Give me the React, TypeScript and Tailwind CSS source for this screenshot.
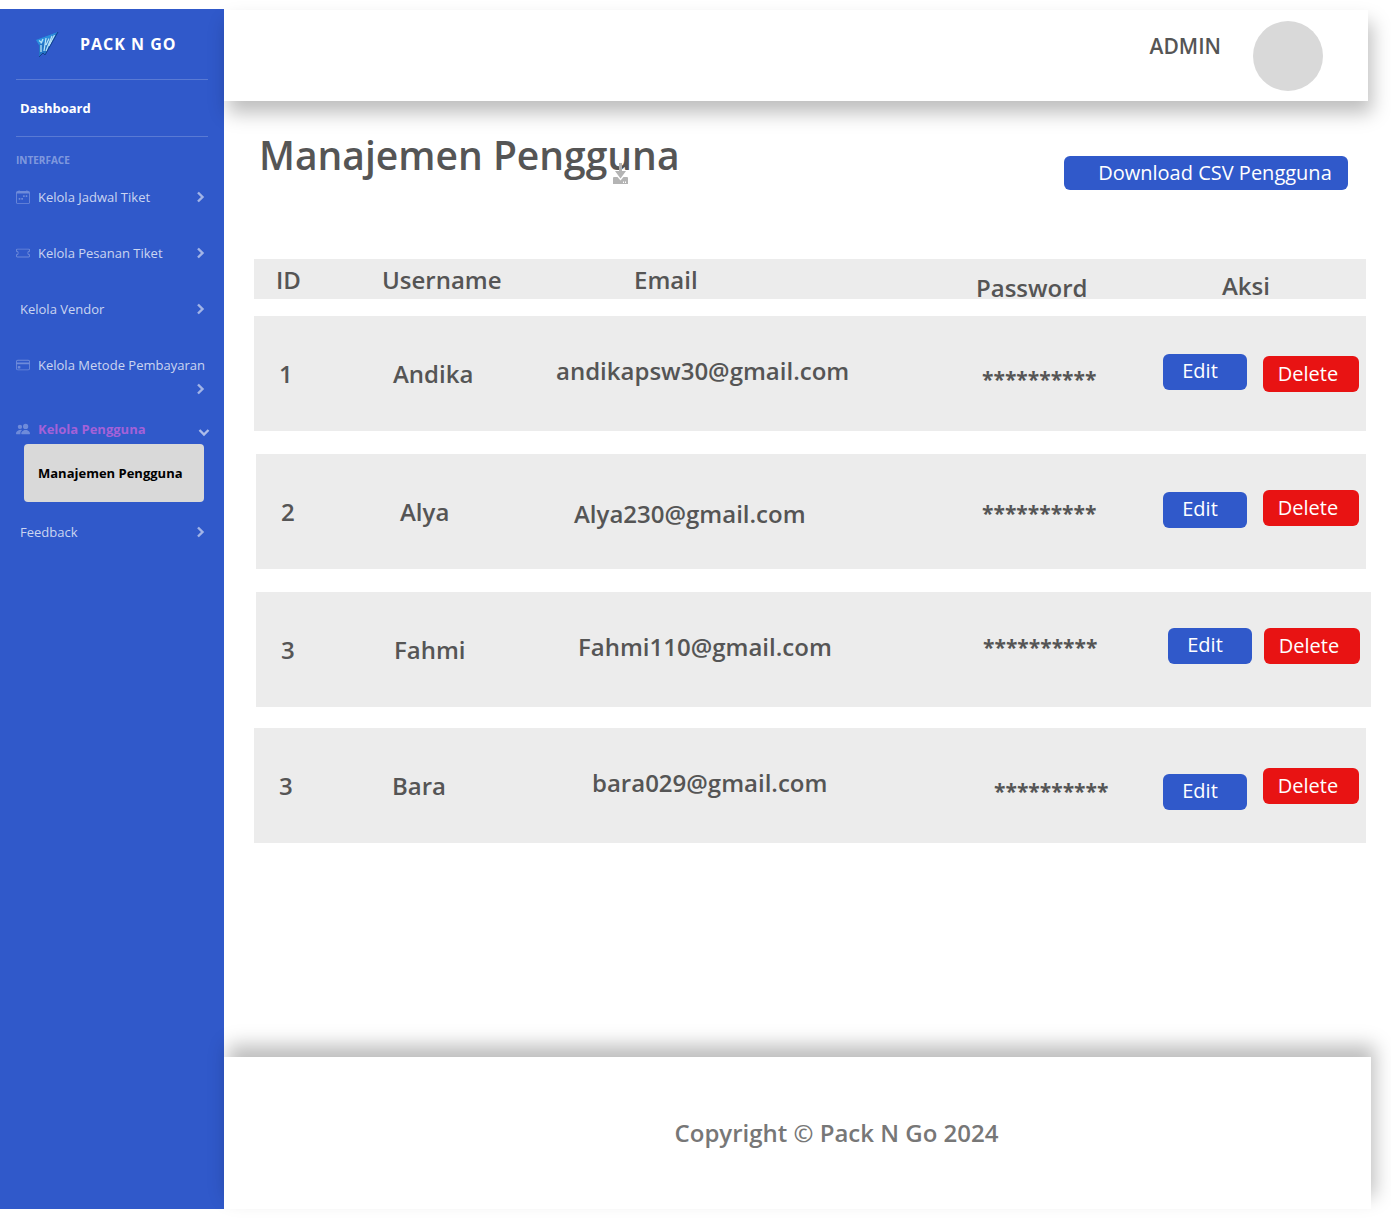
import React from "react";
import { BsCalendarWeek, BsTicket, BsCreditCard, BsPeopleFill } from "react-icons/bs";

type User = {
  id: string;
  name: string;
  email: string;
  row: string;
  nameCell: string;
  emailCell: string;
  passwordCell: string;
  actionCell: string;
  edit: string;
  remove: string;
};

const users: User[] = [
  {
    id: "1",
    name: "Andika",
    email: "andikapsw30@gmail.com",
    row: "mt-[17px] mr-[5px]",
    nameCell: "pl-[19px]",
    emailCell: "pt-10 pl-3",
    passwordCell: "pt-12 pl-4",
    actionCell: "gap-4",
    edit: "mt-[38px]",
    remove: "mt-10",
  },
  {
    id: "2",
    name: "Alya",
    email: "Alya230@gmail.com",
    row: "mt-[23px] ml-0.5 mr-[5px]",
    nameCell: "pl-6",
    emailCell: "pt-[45px] pl-7",
    passwordCell: "pt-11 pl-4",
    actionCell: "gap-4",
    edit: "mt-[38px]",
    remove: "mt-9",
  },
  {
    id: "3",
    name: "Fahmi",
    email: "Fahmi110@gmail.com",
    row: "mt-[23px] ml-0.5",
    nameCell: "pl-[18px]",
    emailCell: "pt-10 pl-8",
    passwordCell: "pt-10 pl-3",
    actionCell: "gap-3",
    edit: "mt-9",
    remove: "mt-9",
  },
  {
    id: "3",
    name: "Bara",
    email: "bara029@gmail.com",
    row: "mt-[21px] mr-[5px]",
    nameCell: "pl-[18px]",
    emailCell: "pt-10 pl-12",
    passwordCell: "pt-12 pl-7",
    actionCell: "gap-4",
    edit: "mt-[46px]",
    remove: "mt-10",
  },
];

function Logo() {
  return (
    <svg width="26" height="28" viewBox="0 0 26 28" aria-hidden="true">
      <path d="M24 2 L2 10 L5 15 L5 27 L9 23 L11 25 Z" fill="#2375c6" />
      <path d="M24 2 L2 10 L5 15 Z" fill="#2b8ede" />
      <path
        d="M5 10.500 L8 13 M9 9 L7 13.500 M7 15 V22 M12 8 L10 21 M15 8.500 L12 15 M18 6 L12 21 M20.500 5 L15 16"
        stroke="#b5e2f8"
        strokeWidth="1.3"
        fill="none"
      />
      <path d="M24 2 L11 25 L9 23 L5 27" stroke="#123f8c" strokeWidth="1" fill="none" />
    </svg>
  );
}

function DownloadIcon() {
  return (
    <svg
      className="absolute top-7 left-[354px]"
      width="15"
      height="21"
      viewBox="0 0 15 21"
      fill="#b4b4b4"
      aria-hidden="true"
    >
      <path d="M6 0h3v8h4L7.500 15.500 2 8h4z" />
      <path
        d="M0 15q0-1 1-1h3.500l3 3.500 3-3.500H14q1 0 1 1v6H0zM10 18.500v1.500h1v-1.500zm2 0v1.500h1v-1.500z"
        fillRule="evenodd"
      />
    </svg>
  );
}

function Chevron({ down = false }: { down?: boolean }) {
  return (
    <svg
      width="12"
      height="12"
      viewBox="0 0 12 12"
      fill="none"
      stroke="currentColor"
      strokeWidth="2.4"
      aria-hidden="true"
    >
      {down ? <path d="M1.500 4 L6 8.500 L10.500 4" /> : <path d="M4 1.500 L8.500 6 L4 10.500" />}
    </svg>
  );
}

function NavLink({ icon, label }: { icon?: React.ReactNode; label: string }) {
  return (
    <a href="#" className={icon ? "flex h-14 items-start px-4" : "flex h-14 items-start pr-4 pl-5"}>
      <span className="flex h-5 flex-1 items-center gap-2 text-white/75">
        {icon && <span className="text-white/30">{icon}</span>}
        {label}
      </span>
      <span className="mt-1 mr-0.5 text-white/55">
        <Chevron />
      </span>
    </a>
  );
}

function Sidebar() {
  return (
    <nav className="w-56 shrink-0 bg-[#3059ca] text-[13px] leading-5 text-white">
      <div className="mx-4 flex h-[71px] items-center gap-5 border-b border-white/20 pl-[18px]">
        <Logo />
        <span className="text-base font-bold tracking-[1px]">PACK N GO</span>
      </div>
      <div className="mx-4 flex h-[57px] items-center border-b border-white/20 pl-1">
        <a href="#" className="font-bold">Dashboard</a>
      </div>
      <h2 className="mt-[13px] mb-[17px] px-4 text-[10px] font-bold text-white/40">INTERFACE</h2>
      <NavLink icon={<BsCalendarWeek size={14} />} label="Kelola Jadwal Tiket" />
      <NavLink icon={<BsTicket size={14} />} label="Kelola Pesanan Tiket" />
      <NavLink label="Kelola Vendor" />
      <a href="#" className="block h-16 px-4">
        <span className="flex items-center gap-2 whitespace-nowrap text-white/75">
          <BsCreditCard size={14} className="text-white/30" />
          Kelola Metode Pembayaran
        </span>
        <span className="mt-2 mr-0.5 flex justify-end text-white/55">
          <Chevron />
        </span>
      </a>
      <a href="#" className="flex items-center gap-2 pr-3.5 pl-4 font-bold text-[#a461d8]">
        <BsPeopleFill size={14} className="text-white/30" />
        <span className="flex-1">Kelola Pengguna</span>
        <span className="mt-1.5 text-white/60">
          <Chevron down />
        </span>
      </a>
      <a
        href="#"
        className="mt-[5px] mr-5 mb-5 ml-6 flex h-[58px] items-center rounded bg-[#d9d9d9] pl-3.5 font-bold whitespace-nowrap text-black"
      >
        Manajemen Pengguna
      </a>
      <NavLink label="Feedback" />
    </nav>
  );
}

function UserTable() {
  const columns = "grid grid-cols-[120px_170px_1fr_190px_210px] bg-[#ececec]";
  return (
    <table className="mt-[69px] mr-5 ml-[30px] block text-left text-2xl leading-[30px] font-semibold">
      <thead className="block">
        <tr className={`${columns} mr-[5px] h-10`}>
          <th className="pt-1.5 pl-[22px] font-semibold">ID</th>
          <th className="pt-1.5 pl-2 font-semibold">Username</th>
          <th className="pt-1.5 pl-[90px] font-semibold">Email</th>
          <th className="pt-3.5 pl-2.5 font-semibold">Password</th>
          <th className="pt-3 pl-[66px] font-semibold">Aksi</th>
        </tr>
      </thead>
      <tbody className="block">
        {users.map((u) => (
          <tr key={u.name} className={`${columns} h-[115px] ${u.row}`}>
            <td className="pt-[43px] pl-[25px]">{u.id}</td>
            <td className={`pt-[43px] ${u.nameCell}`}>{u.name}</td>
            <td className={u.emailCell}>{u.email}</td>
            <td className={`text-[21px] font-bold ${u.passwordCell}`}>**********</td>
            <td className={`flex items-start pl-[7px] text-xl font-medium ${u.actionCell}`}>
              <button className={`h-9 w-[84px] rounded-md bg-[#3059ca] pr-2.5 pb-0.5 text-white ${u.edit}`}>
                Edit
              </button>
              <button className={`h-9 w-24 rounded-md bg-[#e81313] pr-1.5 text-white ${u.remove}`}>Delete</button>
            </td>
          </tr>
        ))}
      </tbody>
    </table>
  );
}

export default function App() {
  return (
    <div className="flex min-h-screen bg-white pt-[9px] pb-2.5 font-['Open_Sans',sans-serif] text-[#555]">
      <Sidebar />
      <div className="flex min-w-0 flex-1 flex-col">
        <header className="relative mt-px mr-[23px] flex h-[91px] items-start justify-end gap-8 bg-white pr-[45px] shadow-[4px_12px_18px_rgba(0,0,0,0.26)]">
          <span className="mt-5 text-[21px] leading-8 font-semibold">ADMIN</span>
          <div className="mt-[11px] size-[70px] rounded-full bg-[#d9d9d9]" />
        </header>
        <main className="flex-1">
          <div className="mt-[34px] flex items-start justify-between pr-[43px] pl-[35px]">
            <div className="relative">
              <h1 className="text-[39px] leading-10 font-semibold whitespace-nowrap">Manajemen Pengguna</h1>
              <DownloadIcon />
            </div>
            <button className="mt-[21px] h-[34px] w-[284px] rounded-md bg-[#3059ca] pl-[18px] text-xl font-medium whitespace-nowrap text-white">
              Download CSV Pengguna
            </button>
          </div>
          <UserTable />
        </main>
        <footer className="relative mr-5 flex h-[152px] items-center justify-center bg-white pl-[78px] text-2xl font-semibold text-[#777] shadow-[4px_-12px_18px_rgba(0,0,0,0.26)]">
          Copyright © Pack N Go 2024
        </footer>
      </div>
    </div>
  );
}
